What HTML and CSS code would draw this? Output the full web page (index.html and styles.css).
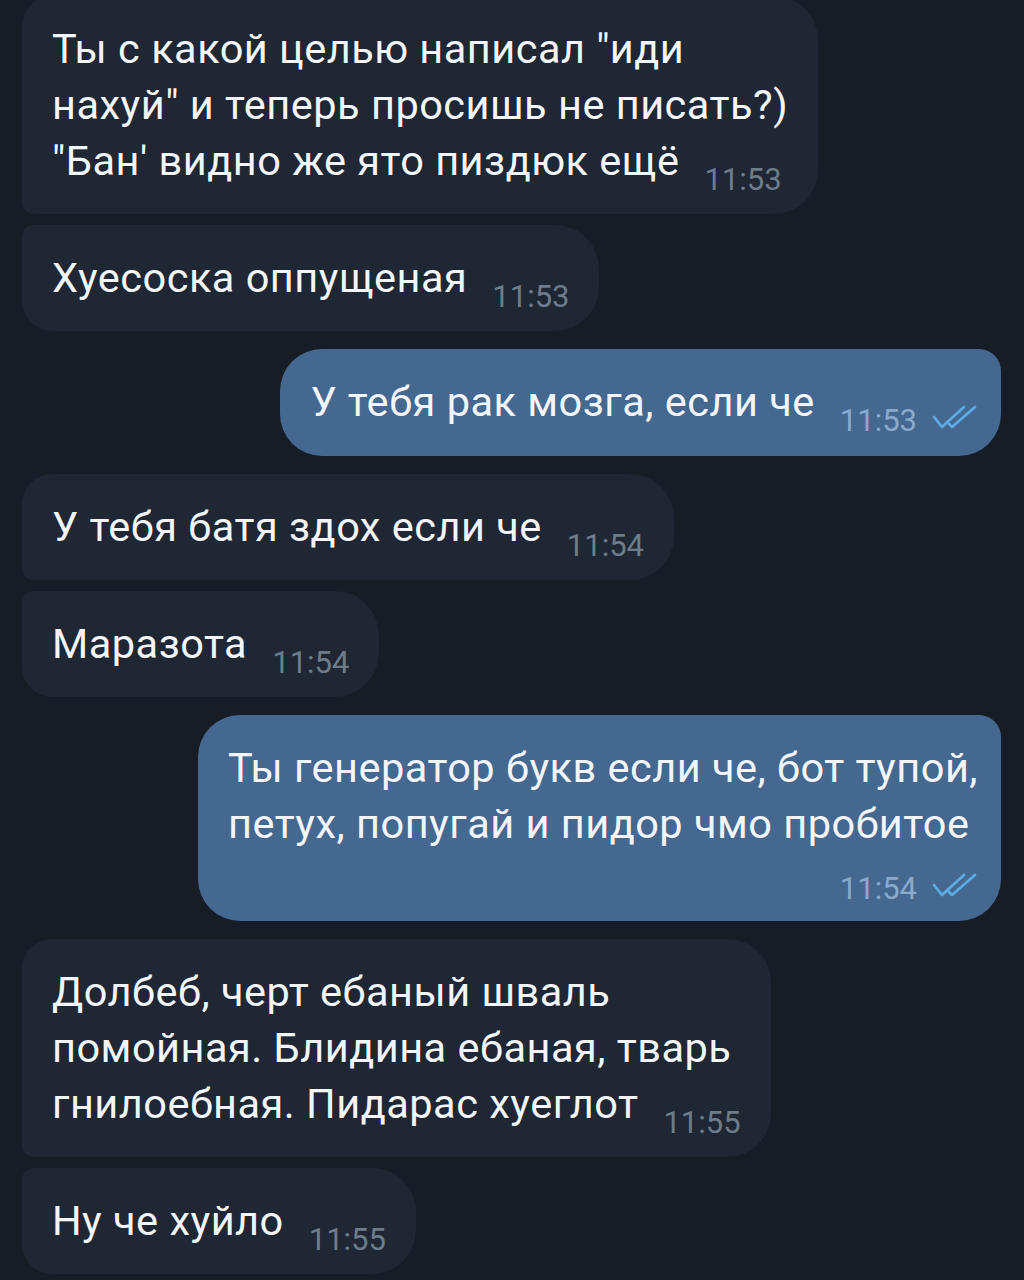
FILE: index.html
```html
<!doctype html>
<html>
<head>
    <title>Chat</title>
    <meta charset="utf-8"/>
    <link rel="stylesheet" href="styles.css">
</head>
<body>
    <div class="chat">
        <div class="group in">
            <div class="msg first">Ты с какой целью написал "иди<br>нахуй" и теперь просишь не писать?)<br>"Бан' видно же ято пиздюк ещё<span class="time">11:53</span></div>
            <div class="msg last">Хуесоска оппущеная<span class="time">11:53</span></div>
        </div>
        <div class="group out">
            <div class="msg">У тебя рак мозга, если че<span class="time">11:53<svg class="checks" width="46" height="26" viewBox="0 0 46 26"><path d="M2 12 L10 22 L32 2 M17 19 L20 22 L43 2"/></svg></span></div>
        </div>
        <div class="group in">
            <div class="msg first">У тебя батя здох если че<span class="time">11:54</span></div>
            <div class="msg last">Маразота<span class="time">11:54</span></div>
        </div>
        <div class="group out">
            <div class="msg">Ты генератор букв если че, бот тупой,<br>петух, попугай и пидор чмо пробитое
                <div class="time-row"><span class="time">11:54<svg class="checks" width="46" height="26" viewBox="0 0 46 26"><path d="M2 12 L10 22 L32 2 M17 19 L20 22 L43 2"/></svg></span></div>
            </div>
        </div>
        <div class="group in">
            <div class="msg first">Долбеб, черт ебаный шваль<br>помойная. Блидина ебаная, тварь<br>гнилоебная. Пидарас хуеглот<span class="time">11:55</span></div>
            <div class="msg last">Ну че хуйло<span class="time">11:55</span></div>
        </div>
    </div>
</body>
</html>
```

FILE: styles.css
```css
body {
    margin: 0;
    background-color: #171d26;
    font-family: Roboto, "Noto Sans", sans-serif;
    overflow: hidden;
}
.chat {
    display: flex;
    flex-direction: column;
    gap: 18px;
    margin-top: -4px;
    padding: 0 23px 0 22px;
}
.group {
    display: flex;
    flex-direction: column;
    gap: 11px;
}
.group.in {
    align-items: flex-start;
}
.group.out {
    align-items: flex-end;
}
.msg {
    font-size: 41.5px;
    letter-spacing: 0.5px;
    line-height: 56px;
    color: #f3f5f8;
    padding: 25px 30px;
    white-space: nowrap;
}
.in .msg {
    background-color: #1e2733;
    border-radius: 12px 44px 44px 12px;
}
.in .msg.first {
    border-top-left-radius: 30px;
}
.in .msg.last {
    border-bottom-left-radius: 30px;
}
.out .msg {
    background-color: #456891;
    border-radius: 42px 22px 42px 42px;
    padding-right: 23px;
}
.time {
    font-size: 31px;
    letter-spacing: 0;
    line-height: 0;
    margin-left: 25px;
    vertical-align: -15px;
    color: #6e7c8a;
}
.out .time {
    color: #8aaacd;
}
.time-row {
    height: 44px;
    line-height: 44px;
    text-align: right;
}
.time-row .time {
    vertical-align: -11px;
}
.checks {
    margin-left: 15px;
    vertical-align: baseline;
}
.checks path {
    fill: none;
    stroke: #5eaae3;
    stroke-width: 2.8;
    stroke-linecap: round;
    stroke-linejoin: round;
}
```
